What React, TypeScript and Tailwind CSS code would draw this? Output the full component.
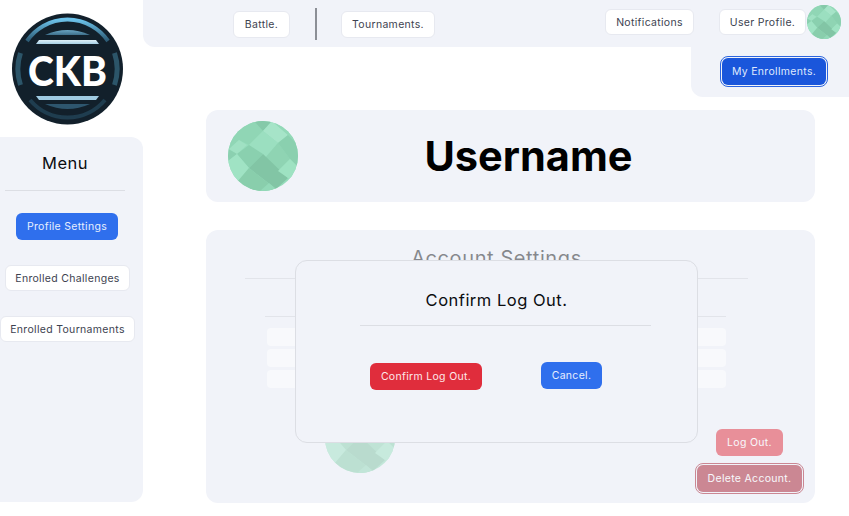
import React from "react";

function Avatar({ className }: { className: string }) {
  const id = React.useId();
  return (
    <svg viewBox="0 0 70 70" className={className}>
      <defs>
        <clipPath id={id}>
          <circle cx="35" cy="35" r="35" />
        </clipPath>
      </defs>
      <g clipPath={`url(#${id})`}>
        <rect width="70" height="70" fill="#95dcbb" />
        <polygon points="0,0 26,0 35,10 21,24 11,19 1,28 0,28" fill="#90d6b5" />
        <polygon points="26,0 44,0 35,10" fill="#85c9a9" />
        <polygon points="35,10 44,0 60,14 50,22" fill="#a6e4c8" />
        <polygon points="44,0 70,0 70,24 60,14" fill="#93d9b8" />
        <polygon points="21,24 35,10 50,22 37,37" fill="#9bdfc0" />
        <polygon points="1,28 11,19 19,24 9,33" fill="#a0e1c3" />
        <polygon points="37,37 50,22 62,38 50,50" fill="#8fd4b3" />
        <polygon points="50,22 60,14 70,24 70,46 62,38" fill="#8ad0af" />
        <polygon points="9,33 21,24 35,33 21,47" fill="#8ad0af" />
        <polygon points="0,28 9,33 0,40" fill="#8bd0b0" />
        <polygon points="21,47 35,33 60,57 48,68" fill="#82c5a5" />
        <polygon points="0,40 9,33 21,47 10,60 0,52" fill="#a0e3c4" />
        <polygon points="50,50 62,38 70,46 70,60 60,57" fill="#9ee2c2" />
        <polygon points="10,60 21,47 48,68 40,70 14,70" fill="#89ceac" />
        <polygon points="32,70 41,62 48,68 52,70" fill="#93d9b8" />
      </g>
    </svg>
  );
}

function Logo() {
  return (
    <svg viewBox="0 0 135 125" className="w-[135px] h-[125px]">
      <defs>
        <linearGradient id="ringTop" x1="0" y1="0" x2="0" y2="1">
          <stop offset="0" stopColor="#6cc2ea" />
          <stop offset="1" stopColor="#2c5a74" />
        </linearGradient>
        <linearGradient id="lens" x1="0" y1="0" x2="0" y2="1">
          <stop offset="0" stopColor="#6aa6c4" />
          <stop offset="1" stopColor="#3e6f8b" />
        </linearGradient>
        <linearGradient id="bar" x1="0" y1="0" x2="0" y2="1">
          <stop offset="0" stopColor="#dff0f8" />
          <stop offset="1" stopColor="#a6d0e6" />
        </linearGradient>
      </defs>
      <circle cx="67.5" cy="64" r="55.5" fill="#12202b" />
      <path d="M27 36 A49 49 0 0 1 108 36" fill="none" stroke="url(#ringTop)" strokeWidth="4" />
      <path d="M30 95 A49 49 0 0 0 105 95" fill="none" stroke="#1f3d4f" strokeWidth="4" />
      <path d="M20.5 48 A50 50 0 0 0 20.5 80" fill="none" stroke="#2c5569" strokeWidth="5" />
      <path d="M114.5 48 A50 50 0 0 1 114.5 80" fill="none" stroke="#2c5569" strokeWidth="5" />
      <path d="M45 30 Q67.5 20 90 30 Z" fill="url(#lens)" />
      <polygon points="39,35 96,35 99,39 36,39" fill="url(#bar)" />
      <polygon points="36,91 99,91 96,95 39,95" fill="#9fcbe2" />
      <path d="M45 99 H90 Q67.5 109 45 99 Z" fill="#2e566e" />
      <text x="67.5" y="80.5" textAnchor="middle" fill="#ffffff" fontFamily="Lato, 'Noto Sans', sans-serif" fontWeight="900" fontSize="41" textLength="79" lengthAdjust="spacingAndGlyphs">CKB</text>
    </svg>
  );
}

const label = "pt-px text-[10.5px] tracking-[0.03em] whitespace-nowrap";
const white = `flex items-center justify-center bg-white rounded-md border border-[#e7e9f0] text-[#3d4250] ${label}`;

export default function App() {
  return (
    <div className="relative flex w-[849px] h-[516px] overflow-hidden bg-white font-['Inter',sans-serif]">
      <aside className="w-[143px] shrink-0 flex flex-col">
        <div className="h-[137px] pt-[5px]">
          <Logo />
        </div>
        <nav className="flex-1 mb-[14px] bg-[#f1f3f9] rounded-r-xl flex flex-col">
          <h2 className="mt-[14px] w-[130px] text-center text-[16.5px] leading-[24px] tracking-[0.03em] text-[#0b0c10]">Menu</h2>
          <div className="mt-[15px] ml-[5px] w-[120px] h-px bg-[#dcdee4]" />
          <button className={`mt-[22px] ml-[16px] w-[102px] h-[27px] bg-[#2f6fed] rounded-md text-[#e6eefe] ${label}`}>Profile Settings</button>
          <button className={`mt-[25px] ml-[5px] w-[125px] h-[26px] ${white}`}>Enrolled Challenges</button>
          <button className={`mt-[25px] w-[135px] h-[26px] ${white}`}>Enrolled Tournaments</button>
        </nav>
      </aside>

      <main className="flex-1 flex flex-col relative">
        <header className="h-[47px] bg-[#f1f3f9] rounded-bl-xl flex items-start">
          <button className={`mt-[11px] ml-[90px] w-[57px] h-[27px] ${white}`}>Battle.</button>
          <div className="mt-[8px] ml-[25px] w-[2px] h-[32px] bg-[#8c8f96]" />
          <button className={`mt-[11px] ml-[24px] w-[94px] h-[27px] ${white}`}>Tournaments.</button>
          <button className={`mt-[9px] ml-[170px] w-[89px] h-[26px] ${white}`}>Notifications</button>
          <button className={`mt-[9px] ml-[25px] w-[87px] h-[26px] ${white}`}>User Profile.</button>
          <Avatar className="mt-[5px] ml-px w-[34px] h-[34px]" />
        </header>

        <div className="absolute top-[47px] right-0 w-[158px] h-[50px] bg-[#f1f3f9] rounded-bl-xl">
          <button className={`absolute top-[11px] left-[31px] w-[104px] h-[27px] bg-[#1a56db] rounded-md text-[#dfe9fd] outline outline-1 outline-offset-1 outline-[#2b64de] ${label}`}>My Enrollments.</button>
        </div>

        <section className="mt-[63px] ml-[63px] w-[609px] h-[92px] bg-[#f1f3f9] rounded-xl flex items-center pl-[22px]">
          <Avatar className="w-[70px] h-[70px] shrink-0" />
          <h1 className="flex-1 text-center pt-[2px] pr-[56px] text-[41.5px] font-bold text-black leading-none">Username</h1>
        </section>

        <section className="relative mt-[28px] ml-[63px] w-[609px] h-[273px] bg-[#f1f3f9] rounded-xl">
          <div className="opacity-50 h-full">
            <h2 className="pt-[14px] text-center text-[20px] leading-[28px] text-[#1c1e24] pr-[28px] tracking-[0.03em]">Account Settings</h2>
            <div className="mt-[6px] ml-[39px] w-[503px] h-px bg-[#d4d6dc]" />
            <div className="mt-[37px] ml-[59px] w-[461px] h-px bg-[#d4d6dc]" />
            <div className="mt-[11px] ml-[61px] w-[459px] flex flex-col gap-[3px]">
              <div className="h-[18px] bg-white rounded" />
              <div className="h-[18px] bg-white rounded" />
              <div className="h-[18px] bg-white rounded" />
            </div>
            <div className="flex mt-[15px]">
              <Avatar className="ml-[119px] w-[70px] h-[70px] shrink-0" />
              <div className="ml-[10px] w-[143px] h-[30px] bg-[#2f6fed] rounded-md" />
              <div className="ml-auto mr-[11px] mt-[26px] w-[109px] flex flex-col items-center gap-[9px]">
                <button className={`w-[67px] h-[27px] bg-[#e02d3c] rounded-md text-white ${label}`}>Log Out.</button>
                <button className={`w-[105px] h-[27px] bg-[#a61e30] rounded-md text-white outline outline-1 outline-offset-1 outline-[#a61e30] ${label}`}>Delete Account.</button>
              </div>
            </div>
          </div>

          <div className="absolute left-[89px] top-[30px] w-[403px] h-[183px] bg-[#f1f3f9] border border-[#dcdee4] rounded-xl flex flex-col items-center">
            <h3 className="mt-[27px] text-[16.5px] leading-[24px] tracking-[0.03em] text-[#0b0c10]">Confirm Log Out.</h3>
            <div className="mt-[13px] ml-[18px] w-[291px] h-px bg-[#dcdee4]" />
            <div className="self-start flex items-start mt-[36px] ml-[74px]">
              <button className={`mt-px w-[112px] h-[27px] bg-[#e02d3c] rounded-md text-[#fde8ea] ${label}`}>Confirm Log Out.</button>
              <button className={`ml-[59px] w-[61px] h-[27px] bg-[#2f6fed] rounded-md text-[#e6eefe] ${label}`}>Cancel.</button>
            </div>
          </div>
        </section>
      </main>
    </div>
  );
}
